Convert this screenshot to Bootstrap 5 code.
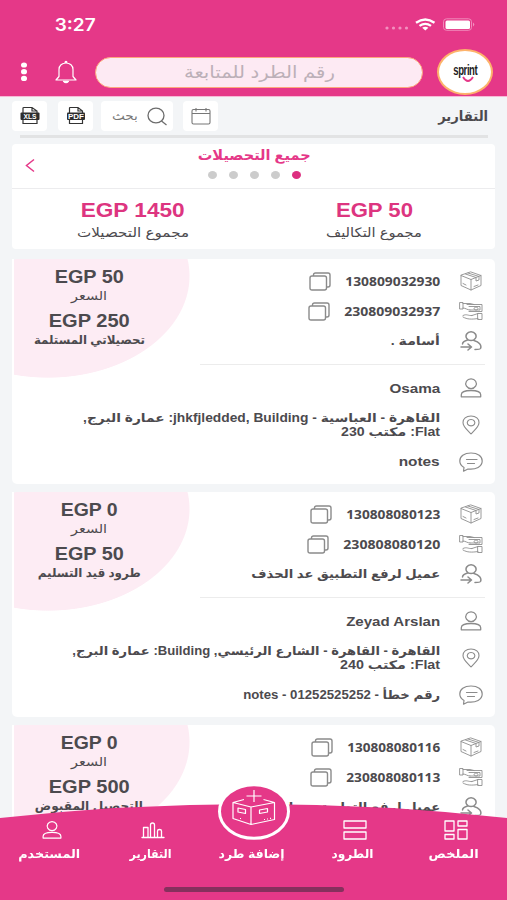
<!DOCTYPE html>
<html lang="ar" dir="rtl">
<head>
<meta charset="utf-8">
<meta name="viewport" content="width=device-width, initial-scale=1">
<title>التقارير</title>
<link href="https://cdn.jsdelivr.net/npm/bootstrap@5.3.0/dist/css/bootstrap.min.css" rel="stylesheet">
<style>
:root{--pink:#e53888;--ink:#4c4a4e}
html,body{height:900px;overflow:hidden}
body{background:#f3f5f7;color:var(--ink);font-family:"Liberation Sans","DejaVu Sans",sans-serif;font-size:12px;line-height:1}
svg{display:block;flex:none}
.fit{display:inline-block;white-space:nowrap;transform-origin:right center;flex:none}
.ico{fill:none;stroke:#8b8b8b;stroke-width:1.1;stroke-linejoin:round;stroke-linecap:round}
.thin{stroke:#8f8f8f;stroke-width:.9}
.topbar{background:var(--pink);height:97px;border-bottom:1px solid #f7b9d6}
.status{height:49px;padding:0 32px 0 55px}
.clock{font:600 17px "Inter",sans-serif;color:#fff}
.brandrow{padding:0 14px 0 20px;height:46px}
.brand{width:56px;height:46px;border:2px solid #fdb36b;border-radius:50%;background:#fff;margin-left:14px}
.wordmark{font:bold 14px/16px "Liberation Sans",sans-serif;color:#222;letter-spacing:-.6px}
.bell{margin:0 18px 0 27px}
.searchpill{width:328px;height:31px;border:1px solid #fda77c;border-radius:16px;background:#fdeaf3;color:#bcb0b8;font-size:17px}
.tools{height:34px;padding:4px 19px 0 12px}
.tile{background:#fff;border-radius:4px;height:30px;width:35px}
.find{width:72px;color:#777}
.rule{height:3px;margin:4px 19px 0 20px;background:#e2e3e4}
.panel{margin:6px 12px 0;height:105px;background:#fff;border-radius:4px}
.panelhead{height:45px;border-bottom:1px solid #ececee;color:var(--pink)}
.dots{width:93px;margin:8px 0 0 1px}
.dots i{width:9px;height:8px;border-radius:50%;background:#ccc}
.dots i.on{background:#dd2f80}
.sum{font:bold 19.5px "Liberation Sans",sans-serif;color:#dd3580}
.parcels{height:651px;overflow:hidden;padding-top:10px}
.parcel{margin:0 12px 8px;height:225px;border-radius:5px;background:radial-gradient(ellipse 142px 102px at 36px 17px,#fdecf4 99.3%,#fff 100%)}
.parcel::before{content:"";display:block;width:2px;height:120px;background:#fff;float:left;margin-bottom:-120px}
.info{width:285px;height:106px;border-bottom:1px solid #ececec;margin-right:10px;padding-top:7px}
.line{height:30px}
.line>svg:first-child{width:24px;margin:0 2px 0 19px}
.line>svg:last-child{margin-right:14px}
.who>svg:first-child{width:24px;margin:0 4px 0 19px}
.num{font:bold 13px "Noto Sans",sans-serif}
.who{margin-right:8px;font-weight:bold}
.lat{font-size:13px;font-weight:bold}
.price{width:152px;padding-top:9px;margin-left:1px}
.egp{font:bold 18px/18px "Liberation Sans",sans-serif}
.dock{z-index:10;height:118px}
.dock .hump{top:0;left:0}
.dock a{color:#fff;font-weight:bold;text-decoration:none;width:101px;height:40px}
.tabs{padding:38px 0 0;width:505px;margin-right:3px}
.tabs .ico{stroke:#fff;stroke-width:1.3;margin-right:-5px}
.home{width:180px;height:5px;border-radius:3px;background:#86305d;margin:27px 163px 0 0}
</style>
<script src="https://cdn.jsdelivr.net/npm/bootstrap@5.3.0/dist/js/bootstrap.bundle.min.js"></script>
</head>
<body>
<svg width="0" height="0" class="position-absolute">
<symbol id="box" viewBox="0 0 24 20"><path d="M12 1 22 4.500V14.500L12 19 2 14.500V4.500ZM2 4.500 12 8.500 22 4.500M12 8.500V19M6.500 3 17 6.500V10L20 9V5.500L9 2M15 15.500 19 14M4 12.500 7 14"/></symbol>
<symbol id="cash" viewBox="0 0 24 20"><path d="M1 1.500H4V8H1ZM4 2.500H11L15 3.500M4 7C7 7 8 9 11 9M8 3.500H23V10.500H10M10 5.500H21V9H11M17 6a2 1.500 0 1 0 .1 0M4 14.500C8 12.500 9 15 13 14.500M4 16C8 18.500 13 18.500 19 17.500M13 14.500 19 12.500M19 12.500H23V18.500H19Z"/></symbol>
<symbol id="send" viewBox="0 0 24 20"><path stroke-width="1.500" d="M12 .8a5 4.400 0 1 0 .1 0ZM8.500 9C5.500 10 3.500 11 3.500 13M2 16H12M9 13 12.500 16 9 19M15 9.500C20 11 23 14 21.500 17.500C21 18.500 18 18.500 16 18.500"/></symbol>
<symbol id="user" viewBox="0 0 24 20"><path stroke-width="1.300" d="M12 .8a5.300 4.900 0 1 0 .1 0ZM2.300 18.800V16.800C2.300 14 5.500 12.500 12 12.500S21.700 14 21.700 16.800V18.800Z"/></symbol>
<symbol id="pin" viewBox="0 0 24 20"><path d="M12 1C7 1 4 4 4 7.500 4 12 8.500 15 12 19 15.500 15 20 12 20 7.500 20 4 17 1 12 1ZM12 4.500a3.800 3.200 0 1 0 .1 0Z"/></symbol>
<symbol id="note" viewBox="0 0 24 20"><path d="M12 1C5 1 .8 4.500 .8 9 .8 12 2.500 14 5 15.500L4.500 19.200 9 17C17 18 23.200 14.500 23.200 9 23.200 4.500 19 1 12 1ZM7.500 7.500H18M8.500 11.500H15.500" stroke-width="1.200"/></symbol>
<symbol id="copy" viewBox="0 0 22 19"><path stroke-width="1.400" d="M3 4H15.500Q17.500 4 17.500 6V16Q17.500 18 15.500 18H3Q1 18 1 16V6Q1 4 3 4ZM4.500 3.500V3Q4.500 1 6.500 1H19Q21 1 21 3V13Q21 15 19 15H18"/></symbol>
</svg>

<header class="topbar" dir="ltr">
 <div class="status d-flex align-items-center justify-content-between">
  <span class="clock fit" data-w="41">3:27</span>
  <svg width="92" height="14" viewBox="0 0 92 14"><g fill="#f290bf"><circle cx="4" cy="10" r="1.600"/><circle cx="10.500" cy="10" r="1.600"/><circle cx="17" cy="10" r="1.600"/><circle cx="23.500" cy="10" r="1.600"/></g><g fill="none" stroke="#fff" stroke-width="2.300"><path d="M33 4.800Q42.300-1.800 51.500 4.800M36.500 7.900Q42.300 3.800 48 7.900"/></g><path d="M39.200 9.800Q42.300 7.500 45.400 9.800L42.300 12.500Z" fill="#fff"/><rect x="60.500" y="0.800" width="28" height="11.500" rx="3" fill="none" stroke="#f08abb"/><rect x="62.500" y="2.500" width="24.500" height="8.500" rx="1.500" fill="#fff"/><path d="M90 4.500Q92.500 6.500 90 8.500Z" fill="#f290bf"/></svg>
 </div>
 <div class="brandrow d-flex align-items-center">
  <svg width="8" height="20" viewBox="0 0 8 20" fill="#fff"><ellipse cx="4" cy="3" rx="3" ry="2.600"/><ellipse cx="4" cy="9.700" rx="3" ry="2.600"/><ellipse cx="4" cy="16.400" rx="3" ry="2.600"/></svg>
  <svg class="bell" width="22" height="24" viewBox="0 0 22 24" fill="none" stroke="#fff" stroke-width="1.200" stroke-linejoin="round"><path d="M10 3Q10 1.300 11 1.300T12 3M1 20H21L18 16.500V9.500C18 5.500 15 3 11 3S4 5.500 4 9.500V16.500Z"/><path d="M8.500 21.300H13.500Q11 24 8.500 21.300Z" fill="#fff"/></svg>
  <div class="searchpill d-flex align-items-center justify-content-center" dir="rtl"><span class="fit" data-w="151">رقم الطرد للمتابعة</span></div>
  <div class="brand d-flex flex-column align-items-center justify-content-center">
   <span class="wordmark fit" data-w="24">sprint</span>
   <svg width="12" height="7" viewBox="0 0 12 7" style="margin:-2px 0 0 6px"><path d="M1 1Q6 9 11 1" fill="none" stroke="#e53888" stroke-width="1.800"/></svg>
  </div>
 </div>
</header>

<div class="tools d-flex align-items-center justify-content-between">
 <span class="fw-bold fit" style="font-size:14px" data-w="50">التقارير</span>
 <div class="d-flex" dir="ltr">
  <div class="tile d-flex align-items-center justify-content-center me-2"><svg width="20" height="20" viewBox="0 0 20 20"><path d="M3 8V2Q3 1.500 4 1.500H12L17 5V8M12 1.500V5H17M3 12V17.500H17V12" fill="none" stroke="#333" stroke-width="1.200"/><rect x=".5" y="6.500" width="19" height="7.500" rx="1" fill="#2e2e2e"/><text x="10" y="12.600" font-family="Liberation Sans" font-size="6.500" font-weight="bold" fill="#fff" text-anchor="middle" textLength="13" lengthAdjust="spacingAndGlyphs">XLS</text></svg></div>
  <div class="tile d-flex align-items-center justify-content-center me-2" style="margin-left:3px"><svg width="20" height="20" viewBox="0 0 20 20"><path d="M3.500 8V2Q3.500 1.500 4 1.500H12L16.500 5V8M12 1.500V5H16.500M3.500 12V17.500H16.500V12" fill="none" stroke="#333" stroke-width="1.200"/><rect x="1" y="6.500" width="18" height="7.500" rx="1" fill="#2e2e2e"/><text x="10" y="12.800" font-family="Liberation Sans" font-size="7" font-weight="bold" fill="#fff" text-anchor="middle" textLength="16" lengthAdjust="spacingAndGlyphs">PDF</text></svg></div>
  <div class="tile find d-flex align-items-center justify-content-end pe-1 gap-2"><span class="fit" data-w="26">بحث</span><svg width="23" height="19" viewBox="0 0 23 19" fill="none" stroke="#6c6c6c" stroke-width="1.300"><ellipse cx="10" cy="8.500" rx="8" ry="7.300"/><path d="M15.500 14 20.500 18"/></svg></div>
  <div class="tile d-flex align-items-center justify-content-center" style="margin-left:10px"><svg width="20" height="18" viewBox="0 0 20 18" fill="none" stroke="#777" stroke-width="1.100"><rect x="1" y="2.500" width="18" height="14.500" rx="1.500"/><path d="M1 6.500H19M5 1V4.500M15 1V4.500"/></svg></div>
 </div>
</div>
<div class="rule"></div>

<section class="panel">
 <div class="panelhead d-flex align-items-start justify-content-between">
  <span style="width:33px"></span>
  <div class="d-flex flex-column align-items-center" style="padding-top:3px">
   <span class="fw-bold fit" style="font-size:14px;line-height:16px" data-w="113">جميع التحصيلات</span>
   <div class="dots d-flex justify-content-between"><i class="on"></i><i></i><i></i><i></i><i></i></div>
  </div>
  <svg width="34" height="44" viewBox="0 0 34 44" fill="none" stroke="#e53888" stroke-width="1.500"><path d="M22 15.500 14.500 21.500 22 27.500"/></svg>
 </div>
 <div class="d-flex text-center">
  <div class="w-50" style="padding-top:10px"><span class="sum fit" dir="ltr" data-w="77">EGP 50</span><br><span class="fit" style="font-size:13px;margin-top:4px" data-w="96">مجموع التكاليف</span></div>
  <div class="w-50" style="padding-top:10px"><span class="sum fit" dir="ltr" data-w="104">EGP 1450</span><br><span class="fit" style="font-size:13px;margin-top:4px" data-w="112">مجموع التحصيلات</span></div>
 </div>
</section>

<main class="parcels">
 <article class="parcel">
  <div class="d-flex justify-content-between">
   <div class="info">
    <div class="line d-flex align-items-center"><svg class="ico thin" height="20"><use href="#box"/></svg><span class="num fit" data-w="95">130809032930</span><svg class="ico" width="22" height="19"><use href="#copy"/></svg></div>
    <div class="line d-flex align-items-center"><svg class="ico thin" height="20"><use href="#cash"/></svg><span class="num fit" data-w="96">230809032937</span><svg class="ico" width="22" height="19"><use href="#copy"/></svg></div>
    <div class="line d-flex align-items-center fw-bold"><svg class="ico" height="20"><use href="#send"/></svg><span class="fit" data-w="49">أسامة .</span></div>
   </div>
   <div class="price d-flex flex-column align-items-center">
    <span class="egp fit" dir="ltr" data-w="69">EGP 50</span><span class="fit my-1" data-w="36">السعر</span><span class="egp fit" style="margin-top:6px" dir="ltr" data-w="81">EGP 250</span><span class="fit fw-bold" style="margin-top:4px" data-w="111">تحصيلاتي المستلمة</span>
   </div>
  </div>
  <div class="who d-flex align-items-center" style="height:46px"><svg class="ico" height="20"><use href="#user"/></svg><span class="lat fit" dir="ltr" data-w="51">Osama</span></div>
  <div class="who d-flex align-items-center" style="height:28px"><svg class="ico" height="20"><use href="#pin"/></svg><div style="line-height:14px"><span class="fit" data-w="357">القاهرة - العباسية - jhkfjledded, Building: عمارة البرج,</span><br><span class="fit" data-w="99">Flat: مكتب 230</span></div></div>
  <div class="who d-flex align-items-center" style="height:45px"><svg class="ico" height="20"><use href="#note"/></svg><span class="lat fit" data-w="41">notes</span></div>
 </article>

 <article class="parcel">
  <div class="d-flex justify-content-between">
   <div class="info">
    <div class="line d-flex align-items-center"><svg class="ico thin" height="20"><use href="#box"/></svg><span class="num fit" data-w="94">130808080123</span><svg class="ico" width="22" height="19"><use href="#copy"/></svg></div>
    <div class="line d-flex align-items-center"><svg class="ico thin" height="20"><use href="#cash"/></svg><span class="num fit" data-w="97">230808080120</span><svg class="ico" width="22" height="19"><use href="#copy"/></svg></div>
    <div class="line d-flex align-items-center fw-bold"><svg class="ico" height="20"><use href="#send"/></svg><span class="fit" data-w="189">عميل لرفع التطبيق عد الحذف</span></div>
   </div>
   <div class="price d-flex flex-column align-items-center">
    <span class="egp fit" dir="ltr" data-w="57">EGP 0</span><span class="fit my-1" data-w="36">السعر</span><span class="egp fit" style="margin-top:6px" dir="ltr" data-w="69">EGP 50</span><span class="fit fw-bold" style="margin-top:4px" data-w="103">طرود قيد التسليم</span>
   </div>
  </div>
  <div class="who d-flex align-items-center" style="height:46px"><svg class="ico" height="20"><use href="#user"/></svg><span class="lat fit" dir="ltr" data-w="94">Zeyad Arslan</span></div>
  <div class="who d-flex align-items-center" style="height:28px"><svg class="ico" height="20"><use href="#pin"/></svg><div style="line-height:14px"><span class="fit" data-w="368">القاهرة - القاهرة - الشارع الرئيسي, Building: عمارة البرج,</span><br><span class="fit" data-w="100">Flat: مكتب 240</span></div></div>
  <div class="who d-flex align-items-center" style="height:45px"><svg class="ico" height="20"><use href="#note"/></svg><span class="fit" data-w="197">رقم خطأ - 01252525252 - notes</span></div>
 </article>

 <article class="parcel">
  <div class="d-flex justify-content-between">
   <div class="info">
    <div class="line d-flex align-items-center"><svg class="ico thin" height="20"><use href="#box"/></svg><span class="num fit" data-w="93">130808080116</span><svg class="ico" width="22" height="19"><use href="#copy"/></svg></div>
    <div class="line d-flex align-items-center"><svg class="ico thin" height="20"><use href="#cash"/></svg><span class="num fit" data-w="94">230808080113</span><svg class="ico" width="22" height="19"><use href="#copy"/></svg></div>
    <div class="line d-flex align-items-center fw-bold"><svg class="ico" height="20"><use href="#send"/></svg><span class="fit" data-w="189">عميل لرفع التطبيق عد الحذف</span></div>
   </div>
   <div class="price d-flex flex-column align-items-center">
    <span class="egp fit" dir="ltr" data-w="57">EGP 0</span><span class="fit my-1" data-w="36">السعر</span><span class="egp fit" style="margin-top:6px" dir="ltr" data-w="81">EGP 500</span><span class="fit fw-bold" style="margin-top:4px" data-w="108">التحصيل المقبوض</span>
   </div>
  </div>
 </article>
</main>

<nav class="dock fixed-bottom">
 <svg class="hump position-absolute" width="507" height="118" viewBox="0 0 507 118"><path d="M0 36Q253 8 507 36V118H0Z" fill="#e53888"/><ellipse cx="254" cy="29.500" rx="34.500" ry="26.800" fill="#e53888" stroke="#fff" stroke-width="3"/><g fill="none" stroke="#fff" stroke-width="1.200" stroke-linejoin="round"><path d="M254 8V20M246.500 14H261.500M244 17.500 233 20.500 251 25 274.500 20.500 263.500 17.500M233 20.500V36.500L251 42.500V25M251 42.500 274.500 37.500V20.500M238 26 245.500 27.500V31.500L238 30ZM259.500 28 267.500 26.500V30L259.500 31.500Z"/><path d="M264 37.500H265M267 37H268M270 36.300H271M240 36.500H241"/></g></svg>
 <div class="tabs position-relative d-flex">
  <a href="#" class="d-flex flex-column align-items-center justify-content-between"><svg class="ico" width="24" height="20" viewBox="0 0 24 20"><path d="M1 1H10V11H1ZM14 1H23V6H14ZM14 9.500H23V19H14ZM1 14.500H10V19H1Z"/></svg><span class="fit" data-w="50">الملخص</span></a>
  <a href="#" class="d-flex flex-column align-items-center justify-content-between"><svg class="ico" width="24" height="20" viewBox="0 0 24 20"><path d="M1 1H23V8H1ZM1 12H23V19H1Z"/></svg><span class="fit" data-w="42">الطرود</span></a>
  <a href="#" class="d-flex flex-column align-items-center justify-content-end"><span class="fit" data-w="66">إضافة طرد</span></a>
  <a href="#" class="d-flex flex-column align-items-center justify-content-between"><svg class="ico" width="24" height="20" viewBox="0 0 24 20"><path d="M1 17.500H23M2.500 17.500V7.500H7V17.500M9.500 17.500V5Q9.500 3 11.500 3T13.500 5V17.500M16.500 17.500V11Q16.500 9.500 18.500 9.500T20.500 11V17.500"/></svg><span class="fit" data-w="42">التقارير</span></a>
  <a href="#" class="d-flex flex-column align-items-center justify-content-between"><svg class="ico" width="22" height="20"><use href="#user"/></svg><span class="fit" data-w="62">المستخدم</span></a>
 </div>
 <div class="home position-relative"></div>
</nav>
<script>
// Stretch each label to its design width and keep the surrounding flow in step.
document.querySelectorAll('.fit').forEach(function(el){
  var w=+el.dataset.w, own=el.getBoundingClientRect().width;
  el.style.transform='scaleX('+(w/own)+')';
  el.style.marginLeft=(w-own)+'px';
});
</script>
</body>
</html>
